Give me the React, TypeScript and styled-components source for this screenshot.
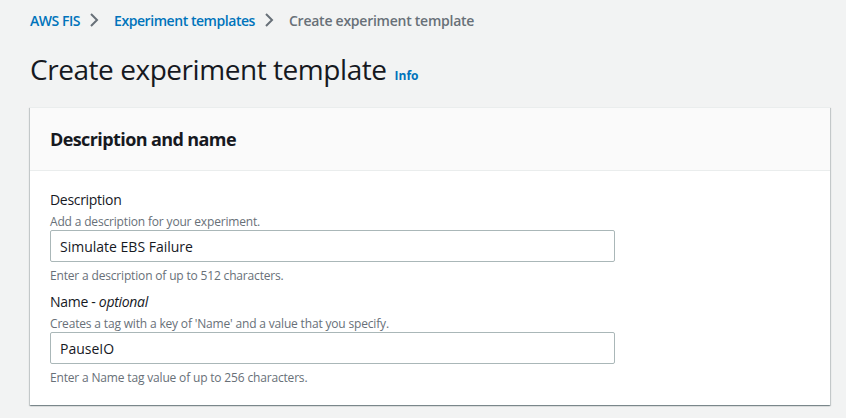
import React from "react";
import styled, { createGlobalStyle } from "styled-components";

const Global = createGlobalStyle`
  html, body { margin: 0; padding: 0; background: #f2f3f3; }
  body { font-family: "Open Sans", "Noto Sans", Arial, sans-serif; color: #16191f; }
  * { box-sizing: border-box; }
`;

const Page = styled.div`
  width: 846px;
  height: 418px;
  padding: 9px 16px 0 30px;
  overflow: hidden;
`;

const Crumbs = styled.nav`
  display: flex;
  align-items: center;
  height: 22px;
  font-size: 14px;
  font-weight: 600;
`;

const Crumb = styled.span<{ $current?: boolean }>`
  color: ${(p) => (p.$current ? "#687078" : "#0073bb")};
  letter-spacing: ${(p) => (p.$current ? "-0.25px" : "-0.45px")};
`;

const Chevron = styled.svg`
  width: 16px;
  height: 16px;
  color: #687078;
  margin: 0 12px 0 6px;
`;

const TitleRow = styled.div`
  display: flex;
  align-items: baseline;
  gap: 8px;
  margin-top: 18px;
`;

const Title = styled.h1`
  margin: 0;
  font-size: 28px;
  font-weight: 400;
  line-height: 40px;
  letter-spacing: -0.45px;
  color: #16191f;
`;

const Info = styled.span`
  font-size: 12px;
  font-weight: 700;
  color: #0073bb;
`;

const Card = styled.section`
  margin-top: 18px;
  width: 800px;
  background: #fff;
  border-top: 1px solid #eaeded;
  box-shadow: 0 1px 1px 0 rgba(0, 28, 36, 0.3), 1px 1px 1px 0 rgba(0, 28, 36, 0.15),
    -1px 1px 1px 0 rgba(0, 28, 36, 0.15);
`;

const CardHeader = styled.header`
  height: 63px;
  display: flex;
  align-items: center;
  padding: 0 20px;
  background: #fafafa;
  border-bottom: 1px solid #eaeded;
`;

const CardTitle = styled.h2`
  margin: 0;
  font-size: 18px;
  font-weight: 700;
  letter-spacing: -0.6px;
  color: #16191f;
`;

const CardBody = styled.div`
  padding: 18px 20px 19px;
  display: flex;
  flex-direction: column;
  gap: 7px;
`;

const Field = styled.div`
  display: flex;
  flex-direction: column;
`;

const Label = styled.label`
  font-size: 14px;
  line-height: 22px;
  letter-spacing: -0.3px;
  color: #16191f;
`;

const Optional = styled.i`
  font-style: italic;
`;

const Hint = styled.div<{ $after?: boolean }>`
  font-size: 12px;
  line-height: 16px;
  letter-spacing: -0.17px;
  color: #687078;
  margin-top: ${(p) => (p.$after ? "6px" : "3px")};
`;

const Input = styled.div`
  width: 565px;
  height: 32px;
  border: 1px solid #aab7b8;
  border-radius: 2px;
  padding: 0 9px;
  display: flex;
  align-items: center;
  font-size: 14px;
  color: #16191f;
  background: #fff;
`;

const ChevronIcon = () => (
  <Chevron viewBox="0 0 16 16" fill="none">
    <path d="M5 2l6 6-6 6" stroke="currentColor" strokeWidth="2" />
  </Chevron>
);

export default function App() {
  return (
    <>
      <Global />
      <Page>
        <Crumbs>
          <Crumb>AWS FIS</Crumb>
          <ChevronIcon />
          <Crumb>Experiment templates</Crumb>
          <ChevronIcon />
          <Crumb $current>Create experiment template</Crumb>
        </Crumbs>
        <TitleRow>
          <Title>Create experiment template</Title>
          <Info>Info</Info>
        </TitleRow>
        <Card>
          <CardHeader>
            <CardTitle>Description and name</CardTitle>
          </CardHeader>
          <CardBody>
            <Field>
              <Label>Description</Label>
              <Hint>Add a description for your experiment.</Hint>
              <Input>Simulate EBS Failure</Input>
              <Hint $after>Enter a description of up to 512 characters.</Hint>
            </Field>
            <Field>
              <Label>
                Name - <Optional>optional</Optional>
              </Label>
              <Hint>Creates a tag with a key of 'Name' and a value that you specify.</Hint>
              <Input>PauseIO</Input>
              <Hint $after>Enter a Name tag value of up to 256 characters.</Hint>
            </Field>
          </CardBody>
        </Card>
      </Page>
    </>
  );
}
